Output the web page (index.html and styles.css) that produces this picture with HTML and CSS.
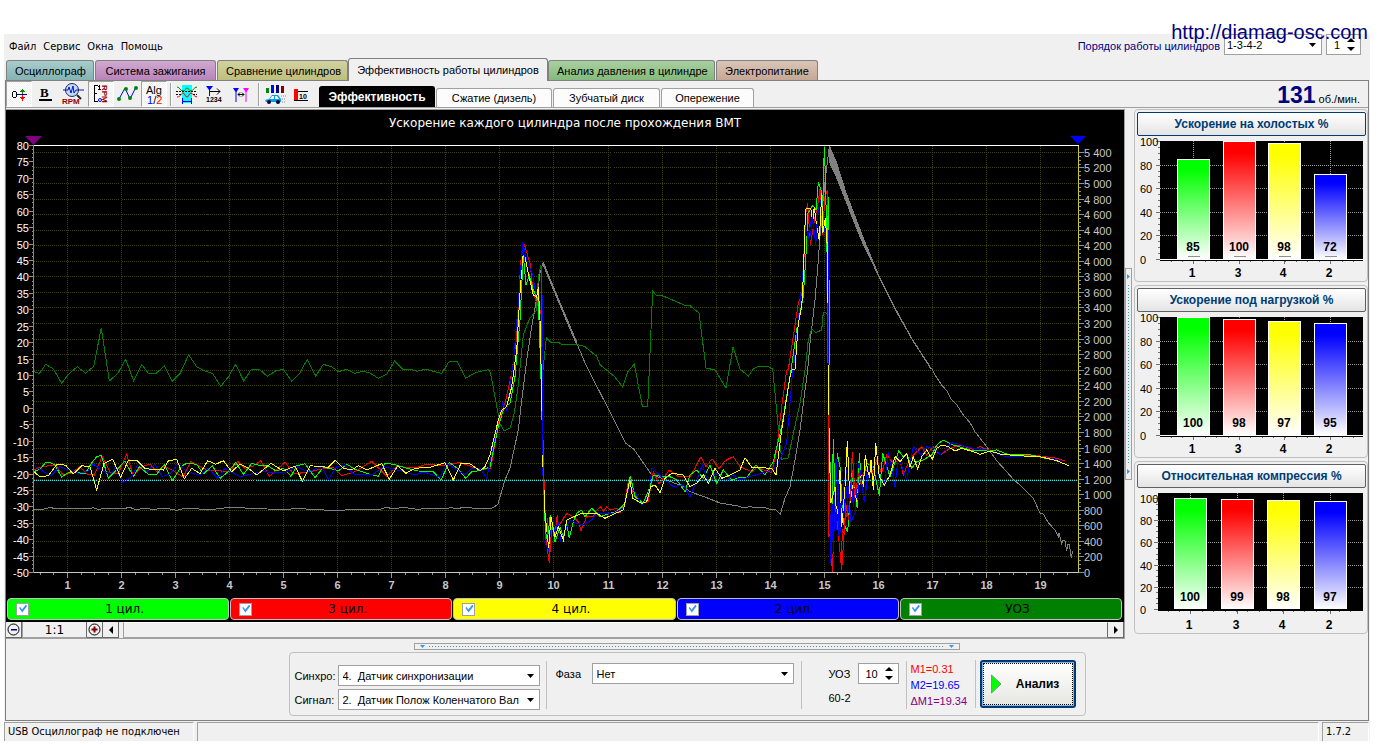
FILE: index.html
```html
<!DOCTYPE html>
<html lang="ru">
<head>
<meta charset="utf-8">
<title>Эффективность работы цилиндров</title>
<link rel="stylesheet" href="styles.css">
</head>
<body>
<div class="app">
  <a class="site" href="http://diamag-osc.com">http://diamag-osc.com</a>
  <header class="top">
    <nav class="menu">
      <button>Файл</button><button>Сервис</button><button>Окна</button><button>Помощь</button>
    </nav>
    <div class="order">
      <label for="order">Порядок работы цилиндров</label>
      <span class="combo combo-order"><select id="order"><option>1-3-4-2</option></select><svg class="arrow" width="7" height="4"><path d="M0 0h7L3.500 4z"/></svg></span>
      <span class="spin spin-small"><input aria-label="Номер" type="number" value="1"><svg class="updown" width="8" height="13"><path d="M0 4L4 0l4 4zM0 9h8l-4 4z"/></svg></span>
    </div>
  </header>
  <nav class="tabs">
    <button class="tab t1">Осциллограф</button>
    <button class="tab t2">Система зажигания</button>
    <button class="tab t3">Сравнение цилиндров</button>
    <button class="tab current">Эффективность работы цилиндров</button>
    <button class="tab t4">Анализ давления в цилиндре</button>
    <button class="tab t5">Электропитание</button>
  </nav>
  <div class="frame">
    <div class="toolbar">
      <button class="tool pressed" aria-label="Ноль"><svg width="26" height="26" shape-rendering="crispEdges"><g fill="none" stroke="#000"><path d="M6.500 11v5M7 10.500h3M7 16.500h3M10.500 11v5"/></g><path d="M11 13h10v1H11z" fill="#00008b"/><path d="M16 8h1v5h-1zM14 10h5v1h-5zM15 9h3v1h-3z" fill="#080"/><path d="M16 14h1v6h-1zM14 16h5v1h-5zM15 17h3v1h-3z" fill="red"/></svg></button>
      <button class="tool" aria-label="Жирный"><svg width="26" height="26"><text x="8" y="16" class="ico-b">B</text><path d="M7 18h13v2H7z"/></svg></button>
      <button class="tool wide" aria-label="RPM лупа"><svg width="29" height="26"><circle cx="13" cy="9" r="6.500" fill="#bcdcff" stroke="#222a50"/><path d="M4 9h5l1-3 2 6 2-7 1 7 2-3h8" fill="none" stroke="#1212b8"/><path d="M18 14l4 4" stroke="#222" stroke-width="2"/><text x="3" y="23" class="ico-rpm">RPM</text></svg></button>
      <button class="tool pressed" aria-label="Шкала RPM"><svg width="26" height="26"><path d="M6.500 4v17M6 4.500h4M6 12.500h3M6 20.500h4M11.500 4v4M10 5.500h1M10 8.500h3" fill="none" stroke="#000" shape-rendering="crispEdges"/><circle cx="12" cy="19" r="1.500" fill="none" stroke="#00f"/><text x="4" y="-14" transform="rotate(90)" class="ico-rpm">RPM</text></svg></button>
      <button class="tool" aria-label="Точки"><svg width="27" height="26"><path d="M5 18L11 7l5 11 6-12" fill="none" stroke="#00f"/><g fill="#080"><circle cx="5" cy="18" r="2"/><circle cx="12" cy="8" r="2"/><circle cx="16" cy="17" r="2"/><circle cx="22" cy="7" r="2"/></g></svg></button>
      <button class="tool pressed" aria-label="Алгоритм"><svg width="26" height="26"><text x="5" y="13" class="ico-s">Alg</text><text x="6" y="23" class="ico-s"><tspan fill="#00f">1</tspan>/<tspan fill="red">2</tspan></text></svg></button>
      <i class="bar"></i>
      <button class="tool" aria-label="Импульс"><svg width="26" height="26"><path d="M8 4h10v18H8z" fill="#0ff"/><path d="M3 6c3 0 3 4 6 4s2-3 4-3 2 3 4 3 3-4 6-4" fill="none" stroke="#080"/><path d="M3 16c4 0 4-4 6-4s2 4 4 4 2-4 4-4 3 4 6 4" fill="none" stroke="red"/><path d="M2 10.500h21M2 13.500h5M19 13.500h4" stroke="#000" stroke-dasharray="2 1"/><path d="M8.500 17v6M17.500 17v6M8 20.500h10" stroke="#00f"/></svg></button>
      <button class="tool" aria-label="Маркер 1234"><svg width="28" height="26"><path d="M5 5h7L9 9v6H8V9z" fill="#00f"/><path d="M9 10.500h10m-3-3l3 3-3 3" stroke="#000" fill="none"/><text x="5" y="21" class="ico-n">1234</text></svg></button>
      <button class="tool" aria-label="Два маркера"><svg width="28" height="26"><path d="M5 7h6L8.500 11v10h-1V11z" fill="#00f"/><path d="M15 7h6l-2.500 4v10h-1V11z" fill="#f0f"/><path d="M10 13.500h6m-4-2l-2 2 2 2m2-4l2 2-2 2" stroke="#000" fill="none"/></svg></button>
      <i class="bar"></i>
      <button class="tool" aria-label="Автомобиль"><svg width="28" height="26"><path d="M4 7h3v5H4z" fill="#080"/><path d="M9 4h3v8H9z" fill="#00f"/><path d="M14 4h3v8h-3z" fill="#000080"/><path d="M19 5h3v7h-3z" fill="#800000"/><path d="M3 19l4-1 3-4h6l3 4v3H4z" fill="#00a0e8"/><path d="M8 18l2-3h2v3zM13 15h2l2 3h-4z" fill="#fff"/><circle cx="7" cy="21" r="2" fill="#003"/><circle cx="16" cy="21" r="2" fill="#003"/><path d="M19 15h5M20 18h4M20 21h4" stroke="#888" stroke-dasharray="1 1"/></svg></button>
      <button class="tool" aria-label="Столбцы 10"><svg width="26" height="26"><path d="M5 8h4v11H5z" fill="red"/><path d="M9 10.500h10M5 19.500h14" stroke="#000"/><text x="10" y="18" class="ico-n">10</text></svg></button>
      <nav class="subtabs">
        <button class="sub on">Эффективность</button>
        <button class="sub s2">Сжатие (дизель)</button>
        <button class="sub s3">Зубчатый диск</button>
        <button class="sub s4">Опережение</button>
      </nav>
      <p class="rpm"><b>131</b> об./мин.</p>
    </div>
    <div class="main">
      <section class="scope">
        <svg id="plot" class="plot" viewBox="6 110 1118 487" role="img" aria-label="Ускорение каждого цилиндра"></svg>
        <div class="legend">
          <label class="key k1"><input type="checkbox" checked><span>1 цил.</span></label>
          <label class="key k3"><input type="checkbox" checked><span>3 цил.</span></label>
          <label class="key k4"><input type="checkbox" checked><span>4 цил.</span></label>
          <label class="key k2"><input type="checkbox" checked><span>2 цил.</span></label>
          <label class="key kt"><input type="checkbox" checked><span>УОЗ</span></label>
        </div>
        <div class="scroll">
          <button class="sbtn" aria-label="Уменьшить"><svg width="13" height="13"><circle cx="6.500" cy="6.500" r="5.500" fill="none" stroke="#000"/><path d="M4 6h6v1.500H4z" fill="#000080"/></svg></button>
          <span class="ratio">1:1</span>
          <button class="sbtn" aria-label="Увеличить"><svg width="13" height="13"><circle cx="6.500" cy="6.500" r="5.500" fill="none" stroke="#000"/><path d="M3.500 6.500h6M6.500 3.500v6" stroke="#800000" stroke-width="2"/></svg></button>
          <button class="sbtn" aria-label="Влево"><svg width="4" height="8"><path d="M4 0v8L0 4z"/></svg></button>
          <span class="track"></span>
          <button class="sbtn" aria-label="Вправо"><svg width="4" height="8"><path d="M0 0v8l4-4z"/></svg></button>
        </div>
      </section>
      <div class="vsplit"><svg width="3" height="5"><path d="M0 0v5l3-2.500z"/></svg><i></i><svg width="3" height="5"><path d="M0 0v5l3-2.500z"/></svg></div>
      <aside class="side">
        <section class="card"><button class="head focus">Ускорение на холостых %</button><svg class="bars" id="idle" viewBox="1135 137 232 145"></svg></section>
        <section class="card"><button class="head">Ускорение под нагрузкой %</button><svg class="bars" id="load" viewBox="1135 137 232 145"></svg></section>
        <section class="card"><button class="head">Относительная компрессия %</button><svg class="bars" id="comp" viewBox="1135 137 232 145"></svg></section>
      </aside>
    </div>
    <div class="hsplit"><svg width="5" height="3"><path d="M0 0h5L2.500 3z"/></svg><i></i><svg width="5" height="3"><path d="M0 0h5L2.500 3z"/></svg></div>
    <form class="params">
      <div class="inputs">
        <label for="sync">Синхро:</label>
        <span class="combo"><select id="sync"><option>4.&nbsp; Датчик синхронизации</option></select><svg class="arrow" width="7" height="4"><path d="M0 0h7L3.500 4z"/></svg></span>
        <label for="signal">Сигнал:</label>
        <span class="combo"><select id="signal"><option>2.&nbsp; Датчик Полож Коленчатого Вал</option></select><svg class="arrow" width="7" height="4"><path d="M0 0h7L3.500 4z"/></svg></span>
      </div>
      <div class="phase">
        <label for="phase">Фаза</label>
        <span class="combo"><select id="phase"><option>Нет</option></select><svg class="arrow" width="7" height="4"><path d="M0 0h7L3.500 4z"/></svg></span>
      </div>
      <div class="uoz">
        <label for="uoz">УОЗ</label>
        <span class="spin"><input id="uoz" type="number" value="10"><svg class="updown" width="8" height="13"><path d="M0 4L4 0l4 4zM0 9h8l-4 4z"/></svg></span>
        <span class="teeth">60-2</span>
      </div>
      <div class="marks"><span class="m1">M1=0.31</span><span class="m2">M2=19.65</span><span class="dm">ΔM1=19.34</span></div>
      <div class="go"><button type="button" class="run"><svg width="11" height="20"><path d="M.5 1v18L10 10z" fill="#0f0" stroke="#7a9a7a"/></svg><span>Анализ</span></button></div>
    </form>
  </div>
  <footer class="status"><span class="st">USB Осциллограф не подключен</span><span class="st"></span><span class="st">1.7.2</span></footer>
</div>
<script src="chart.js"></script>
</body>
</html>
```
FILE: styles.css
```css
* { box-sizing: border-box; }
body { margin: 0; background: #fff; color: #000; font: 11px/14px "Liberation Sans", Arial, sans-serif; }
button, input, select { font: inherit; color: inherit; margin: 0; padding: 0; border: 0; background: none; }
p { margin: 0; }
svg { display: block; flex: none; }

.app { position: relative; margin: 34px 12px 4px 4px; padding-right: 1px; background: #f0f0f0; }
.site { position: absolute; right: 2px; top: -14px; z-index: 2; font-size: 20px; line-height: 24px; color: #000080; text-decoration: none; }

.top { display: flex; justify-content: space-between; height: 24px; }
.menu { display: flex; gap: 7px; padding: 6px 0 0 5px; font-family: "DejaVu Sans Condensed", "DejaVu Sans", sans-serif; }
.menu button { height: 14px; }
.order { display: flex; align-items: flex-start; gap: 4px; padding-right: 8px; color: #000080; }
.order label { padding-top: 5px; }
.order .combo, .order .spin { color: #000; }

.combo, .spin { position: relative; display: block; height: 21px; border: 1px solid #a0a0a0; background: #fff; }
.combo select { width: 100%; height: 19px; padding: 0 16px 0 4px; appearance: none; outline: 0; }
.combo-order { width: 98px; }
.combo-order select { padding-left: 2px; }
.arrow { position: absolute; right: 5px; top: 8px; }
.spin { width: 41px; }
.spin-small { width: 35px; }
.spin input { width: 100%; height: 19px; padding-left: 7px; appearance: textfield; -moz-appearance: textfield; outline: 0; }
.spin input::-webkit-inner-spin-button { display: none; }
.updown { position: absolute; right: 5px; top: 3px; }

.tabs { display: flex; align-items: flex-end; gap: 1px; height: 22px; padding-left: 2px; }
.tab { height: 20px; padding: 0 8px; border: 1px solid #808080; border-bottom: 0; border-radius: 3px 3px 0 0; white-space: nowrap; }
.t1 { width: 88px; background: linear-gradient(#a9cccc, #84b2b2); }
.t2 { width: 121px; background: linear-gradient(#d0a9d0, #b984b9); }
.t3 { width: 131px; background: linear-gradient(#d2d2a0, #bebe7c); }
.t4 { width: 167px; background: linear-gradient(#a9d0a0, #84b97c); }
.t5 { width: 102px; background: linear-gradient(#dac5b8, #c6a795); }
.tab.current { width: 200px; height: 23px; margin: 0 -1px -1px; background: #f0f0f0; position: relative; }

.frame { margin-left: 1px; border: 1px solid #808080; }
.toolbar { display: flex; height: 27px; border-bottom: 1px solid #a0a0a0; }
.tool { width: 27px; height: 26px; }
.tool.wide { width: 29px; }
.tool.pressed { width: 26px; border: 1px solid #a0a0a0; border-right-color: #fff; border-bottom-color: #fff; background: repeating-conic-gradient(#fff 0 25%, #f0f0f0 0 50%) 0 0 / 2px 2px; }
.tool.pressed svg { margin: -1px; }
.bar { width: 2px; height: 23px; margin: 2px 2px 0 3px; border-left: 1px solid #a0a0a0; border-right: 1px solid #fff; }
.ico-b { font: bold 13px "Liberation Serif", serif; }
.ico-rpm { font: bold 8px "Liberation Sans", sans-serif; fill: #900; }
.ico-s { font: 11px "Liberation Sans", sans-serif; }
.ico-n { font: bold 7px "Liberation Sans", sans-serif; }
.subtabs { display: flex; align-items: flex-end; gap: 1px; padding-left: 3px; }
.sub { height: 19px; border: 1px solid #a0a0a0; border-bottom: 0; border-radius: 3px 3px 0 0; background: #fcfcfc; }
.sub.on { width: 116px; height: 21px; background: #000; border-color: #000; color: #fff; font: bold 12px/14px "Liberation Sans", sans-serif; }
.s2 { width: 116px; }
.s3 { width: 107px; }
.s4 { width: 93px; }
.rpm { margin-left: auto; padding-right: 8px; line-height: 28px; white-space: nowrap; }
.rpm b { font-size: 23px; color: #000080; }

.main { display: grid; grid-template-columns: 1fr 7px 236px; padding-top: 1px; }
.scope { border: 1px solid #a0a0a0; border-left: 0; background: #000; }
.plot { width: 100%; height: auto; }
.legend { display: grid; grid-template-columns: repeat(5, 1fr); gap: 1px; padding: 1px 2px 2px 1px; }
.key { display: flex; align-items: center; height: 22px; padding: 0 8px; border: 1px solid #c0c0c0; border-radius: 4px; font: 12px/16px "DejaVu Sans", sans-serif; }
.key span { flex: 1; text-align: center; }
.key input { appearance: none; position: relative; width: 13px; height: 13px; border: 1px solid #a0a0a0; background: #fff; }
.key input:checked::before { content: ""; position: absolute; left: 2px; top: 1px; width: 8px; height: 8px; background: #3296f4; clip-path: polygon(0 40%, 14% 30%, 38% 62%, 88% 0, 100% 22%, 40% 100%); }
.k1 { background: #0f0; }
.k3 { background: #f00; }
.k4 { background: #ff0; }
.k2 { background: #00f; }
.kt { background: #008000; }
.scroll { display: flex; height: 16px; background: #f0f0f0; }
.sbtn { display: flex; align-items: center; justify-content: center; width: 16px; border-right: 1px solid #696969; border-bottom: 1px solid #696969; }
.ratio { width: 65px; text-align: center; font: 12px/17px "DejaVu Sans", sans-serif; border-right: 1px solid #696969; border-left: 1px solid #a0a0a0; border-bottom: 1px solid #a0a0a0; }
.track { flex: 1; margin-left: 4px; border: 1px solid #a0a0a0; border-top-color: #fff; border-right-color: #696969; }

.vsplit { display: flex; flex-direction: column; align-items: center; justify-content: space-between; align-self: center; height: 212px; padding: 5px 0; border: 1px solid #a0a0a0; }
.vsplit i { width: 1px; height: 178px; background: repeating-linear-gradient(#3296f4 0 1px, transparent 1px 3px); }
.vsplit svg, .hsplit svg { fill: #3296f4; }
.side { display: flex; flex-direction: column; gap: 3px; padding-left: 2px; }
.card { border: 1px solid #c0c0c0; border-radius: 4px; padding-top: 2px; }
.head { display: block; width: calc(100% - 3px); height: 24px; margin: 0 1px 0 2px; border: 1px solid #606060; border-radius: 2px; background: linear-gradient(#fff, #e4e4e4); color: #003c74; font-weight: bold; font-size: 12px; }
.head.focus { border-color: #003c74; }
.bars { width: 100%; height: auto; overflow: visible; }

.hsplit { display: flex; align-items: center; justify-content: space-between; width: 546px; max-width: 100%; height: 7px; margin: 4px auto 2px; border: 1px solid #a0a0a0; padding: 0 5px; }
.hsplit i { flex: 1; height: 1px; margin: 0 4px; background: repeating-linear-gradient(90deg, #3296f4 0 1px, transparent 1px 3px); }
.params { display: flex; width: 797px; max-width: 100%; height: 64px; margin: 0 auto 4px; border: 1px solid #c0c0c0; border-radius: 4px; }
.inputs { display: grid; grid-template-columns: 40px 202px; gap: 3px 3px; align-content: start; padding: 12px 6px 0 5px; }
.inputs label { padding-top: 4px; }
.phase { display: flex; gap: 10px; padding: 2px 7px 0 9px; }
.phase label { padding-top: 4px; width: 26px; }
.phase .combo { width: 202px; }
.phase, .uoz, .marks, .go { border-left: 1px solid #c0c0c0; margin-top: 8px; height: 48px; }
.uoz { display: grid; grid-template-columns: 22px 41px; gap: 7px; align-content: start; padding: 2px 7px 0 27px; }
.uoz label { padding-top: 4px; }
.teeth { white-space: nowrap; }
.marks { display: flex; flex-direction: column; padding-left: 4px; width: 69px; line-height: 16px; white-space: nowrap; }
.m1 { color: #f00; }
.m2 { color: #00f; }
.dm { color: #800080; }
.go { margin-top: 7px; padding-left: 4px; }
.run { display: flex; align-items: center; width: 96px; height: 48px; padding-left: 9px; border: 2px solid #003c74; border-radius: 3px; background: linear-gradient(#fff, #e6e6e0); outline: 1px dotted #000; outline-offset: -4px; font-weight: bold; font-size: 12px; box-shadow: inset 0 0 0 1px #8ab4ec; }
.run span { flex: 1; text-align: center; }

.status { display: grid; grid-template-columns: 190px 1fr 47px; gap: 3px; height: 19px; margin-top: 1px; font-family: "DejaVu Sans Condensed", "DejaVu Sans", sans-serif; }
.st { padding: 2px 3px; border-top: 1px solid #a0a0a0; border-left: 1px solid #a0a0a0; border-right: 1px solid #fff; white-space: nowrap; }

.t { font: 11px "Liberation Sans", Arial, sans-serif; }
.tb { font: bold 11px "Liberation Sans", Arial, sans-serif; }
.tc { font: bold 12px "Liberation Sans", Arial, sans-serif; }
.title { font: 12px "DejaVu Sans", sans-serif; }
```
FILE: chart.js
```js
const NS = 'http://www.w3.org/2000/svg';
function add(parent, name, attrs, text) {
  const e = document.createElementNS(NS, name);
  for (const k in attrs) e.setAttribute(k, attrs[k]);
  if (text !== undefined) e.textContent = text;
  parent.appendChild(e);
  return e;
}
function path(svg, d, stroke, extra) {
  return add(svg, 'path', Object.assign({ d, stroke, fill: 'none', 'shape-rendering': 'crispEdges' }, extra));
}

const plot = document.getElementById('plot');
const L = 33.5, R = 1078.5, T = 145.5, B = 572.5;
const xOf = n => Math.round(67 + (n - 1) * 54.05) + 0.5;
const yRight = v => Math.round(572 - v * 0.0778) + 0.5;
const yLeft = v => Math.round(145 + (80 - v) * 3.285) + 0.5;

add(plot, 'text', { x: 565, y: 127, fill: '#fff', 'text-anchor': 'middle', class: 'title' }, 'Ускорение каждого цилиндра после прохождения ВМТ');

let grid = '', ticks = '';
for (let v = 200; v <= 5400; v += 200) grid += `M${L} ${yRight(v)}H${R}`;
for (let n = 1; n <= 19; n++) grid += `M${xOf(n)} ${T}V${B}`;
path(plot, grid, '#404000', { 'stroke-dasharray': '1 1' });

for (let v = 0; v <= 5400; v += 50) ticks += `M${R} ${yRight(v)}h${v % 200 ? 2 : 5}`;
for (let v = -50; v <= 80; v += 1.25) ticks += `M${L} ${yLeft(v)}h${v % 5 ? -2 : -5}`;
for (let n = 0.5; n < 19.6; n += 0.25) ticks += `M${xOf(n)} ${B}v${n % 1 ? 2 : 5}`;
path(plot, ticks, '#909090');
for (let v = 0; v <= 5400; v += 200)
  add(plot, 'text', { x: 1084, y: yRight(v) + 4, fill: '#c8c8c8', class: 't' }, String(v).replace(/(\d)(\d{3})$/, '$1 $2'));
for (let v = -50; v <= 80; v += 5)
  add(plot, 'text', { x: 29, y: yLeft(v) + 4, fill: '#fff', 'text-anchor': 'end', class: 't' }, v);
for (let n = 1; n <= 19; n++)
  add(plot, 'text', { x: xOf(n), y: 589, fill: '#c8c8c8', 'text-anchor': 'middle', class: 'tb' }, n);

// Each trace is a list of blocks: origin x, origin y, then points in thirds of a unit.
function trace(color, blocks, extra) {
  const pts = [];
  for (const [ox, oy, s] of blocks)
    for (const p of s.split(',')) {
      const [x, y] = p.trim().split(' ').map(Number);
      pts.push(`${(ox + x / 3).toFixed(1)} ${(oy + y / 3).toFixed(1)}`);
    }
  path(plot, 'M' + pts.join('L'), color, extra);
}

trace('#808080', [
  [0, 300, '101 628,130 628,150 622,165 626,270 626,280 623,295 628,320 625,375 625,390 622,408 630,430 625,460 628,500 625,530 631,550 626,640 628,690 622,720 622,740 625,800 627,850 628,900 626,990 631,1140 628,1160 622,1180 627,1210 622,1250 628,1290 625,1340 627,1350 622,1370 627,1390 622,1440 626'],
  [470, 220, '65 865,83 854,105 780,120 745,145 630,155 540,170 420,185 320,200 235,210 160,219 128,270 252,320 370,350 440,412 560,467 670,492 688,545 765,590 780,640 800,660 815,705 831,750 849'],
  [740, 370, '0 409,10 414,30 410,50 414,70 412,90 418,105 417,121 432,135 385,150 350,165 270,180 180,195 60,203 0'],
  [740, 130, '210 640,225 510,235 390,245 250,258 130,268 50']
]);
trace('#808080', [[470, 220, '219 128,240 180,270 252,320 370']], { 'stroke-width': 2 });
trace('none', [[740, 130, '266 45,270 48,290 95,320 190,370 320,415 430,470 540,520 630,577 718,570 715,517 632,462 535,408 425,360 325,315 210,285 135,266 95']], { fill: '#808080' });
trace('#808080', [[740, 370, '574 -6,590 23,605 45,620 62,635 90,650 104,670 135,690 158,705 185,740 230,770 272,800 305,820 328,840 345,880 385,900 430,910 432,925 458,945 480,955 500,957 490,965 520,970 510,975 512,980 542,983 523,988 523,994 565,998 542']]);
trace('#008000', [
  [0, 300, '101 214,118 221,137 193,160 207,185 250,207 221,232 200,257 220,281 199,304 84,328 243,354 220,377 178,401 243,425 193,445 220,468 220,493 198,517 244,541 219,566 164,590 200,615 213,638 221,662 259,685 231,707 193,731 243,754 208,778 208,802 229,828 212,850 208,875 244,899 220,922 178,947 228,970 193,995 201,1016 215,1041 208,1064 220,1088 214,1110 219,1135 235,1160 223,1184 183,1208 208,1232 208,1252 214,1276 207,1300 214,1325 220,1348 184,1372 184,1397 235,1420 221,1440 214'],
  [470, 220, '57 449,62 462,90 611,102 632,120 625,133 580,145 495,160 345,178 297,200 270,205 170,213 135,219 450,229 354,242 367,267 368,274 373,325 374,345 380,380 409,390 434,434 470,458 501,475 452,493 433,517 558,533 559,548 212,558 225,580 228,642 255,660 257,687 279,708 444,735 450,768 504,789 381,810 447'],
  [740, 370, '25 18,42 -5,60 -12,80 -12,98 -4,118 205,125 268,145 264,160 190,180 100,195 0'],
  [740, 130, '205 630,215 597,227 608,245 600,250 547,262 550,268 690']
]);
trace('#f00', [
  [0, 300, '101 510,125 500,165 495,190 525,215 518,240 500,260 522,283 525,307 469,332 520,355 520,380 463,400 528,425 500,450 492,470 515,493 498,517 510,550 532,572 484,590 495,620 510,690 515,713 484,735 505,755 500,783 482,808 530,830 508,856 487,880 522,930 515,960 508,1000 502,1025 527,1065 515,1115 484,1160 528,1190 500,1250 503,1280 492,1330 498,1380 487,1440 510'],
  [470, 220, '62 745,85 610,105 550,125 460,140 350,152 125,163 72,180 130,190 220,205 260,207 295,213 270,220 715,228 960,238 1030,245 920,255 945,262 885,265 920,290 880,310 890,325 905,333 932,350 890,370 890,380 870,392 860,400 875,410 860,420 870,440 865,450 880,465 845,475 785,490 820,515 850,535 845,550 755,567 792,598 750,625 770,660 770,675 744,693 710,708 740,726 716,747 746,765 722,790 710'],
  [740, 370, '0 290,35 305,50 293,95 308,110 240,125 110,140 0'],
  [740, 130, '145 718,175 520,188 485,197 250,203 220,211 345,225 260,232 235,241 172,247 315,255 200,262 180,265 700'],
  [740, 370, '265 500,271 490,277 605,285 400,293 470,305 600,315 450,330 400,337 245,345 370,360 330,375 300,395 310,410 270,425 310,440 255,460 280,480 270,490 315,500 290,515 260,545 230,560 255,580 230,600 255,630 235,660 225,700 238,720 230,740 238,780 252,830 257,900 258,950 265,975 273']
]);
trace('#0f0', [
  [0, 300, '101 515,120 508,137 487,150 487,165 495,185 532,200 520,220 515,255 522,275 488,290 470,304 466,325 535,345 515,375 483,400 530,418 500,445 523,470 523,493 493,517 542,545 498,560 490,590 493,610 522,637 497,660 535,685 515,707 487,730 523,755 490,780 497,800 495,828 513,850 505,873 529,890 497,915 491,945 533,970 502,1000 508,1016 512,1041 493,1065 508,1100 520,1135 529,1155 490,1180 493,1215 503,1255 513,1300 515,1323 540,1348 487,1372 505,1397 535,1415 515,1440 512'],
  [470, 220, '60 740,85 620,100 570,120 550,135 470,150 300,160 105,168 195,178 165,190 210,205 240,212 440,219 720,226 930,232 960,241 885,255 965,270 920,280 950,290 910,298 955,310 905,320 880,335 870,345 890,365 865,390 890,420 880,440 875,465 850,481 768,495 830,520 850,540 800,550 765,580 770,600 770,620 780,645 815,660 765,680 750,700 775,720 735,740 790,760 750,785 780'],
  [740, 370, '0 322,20 323,48 285,75 315,100 275,125 170,153 0'],
  [740, 130, '170 600,190 500,200 340,204 250,218 226,228 240,235 157,243 180,248 230,253 52,257 160,260 365,266 200,268 690'],
  [740, 370, '268 200,275 460,280 208,285 380,292 250,300 290,310 460,323 485,335 310,352 415,358 250,365 350,380 280,400 290,418 377,428 250,450 320,476 243,490 260,500 250,515 295,530 275,550 270,575 255,590 225,610 210,640 225,700 243,770 240,800 252,870 254,930 268,950 268']
]);
trace('#00f', [
  [0, 300, '106 500,152 528,180 500,235 520,262 515,280 492,310 515,335 520,345 500,368 547,395 530,415 490,440 515,465 492,487 530,510 522,535 490,560 515,600 525,625 505,653 535,675 505,720 530,780 515,850 518,890 500,925 515,965 500,985 538,1010 500,1035 495,1060 522,1120 523,1150 500,1200 512,1245 525,1270 516,1320 532,1340 490,1395 525,1415 505,1440 505'],
  [470, 220, '50 775,85 600,98 550,110 570,130 430,145 250,158 65,170 120,188 165,200 235,206 200,213 380,217 570,221 960,235 990,245 900,255 935,265 905,272 960,300 900,320 910,340 915,365 900,380 880,430 880,460 865,478 800,495 815,515 855,535 830,546 745,580 775,610 800,640 795,660 830,680 780,697 735,715 790,738 760,765 785,790 765'],
  [740, 370, '0 330,100 298,115 280,140 220,158 0'],
  [740, 130, '162 700,172 600,188 440,196 290,208 330,218 270,227 345,235 240,243 210,250 320,256 280,260 460,267 700'],
  [740, 370, '268 60,271 578,276 400,280 545,288 265,298 520,310 350,320 300,333 455,345 430,355 280,373 395,390 280,410 310,433 345,445 245,465 350,475 260,500 330,520 230,545 255,560 230,585 235,600 255,635 218,700 235,740 240,790 258,900 260,965 272']
]);
trace('#ff0', [
  [0, 300, '101 515,120 530,145 527,172 492,197 496,220 522,245 497,270 500,290 570,312 490,338 478,362 532,385 481,410 481,435 506,490 510,505 483,530 478,553 536,575 505,600 521,623 482,647 493,670 482,695 515,720 492,745 505,770 525,813 490,850 513,885 498,907 544,930 497,985 502,1005 481,1030 505,1055 510,1075 497,1100 510,1145 491,1168 538,1193 497,1218 520,1245 505,1290 502,1335 488,1360 540,1383 490,1408 490,1440 512'],
  [470, 220, '45 740,60 705,85 600,95 570,110 560,125 500,140 390,150 220,158 110,165 110,175 160,190 225,200 232,205 200,210 300,215 520,219 740,225 880,236 985,243 890,255 950,265 920,280 960,290 900,330 882,380 880,405 895,425 885,460 870,480 780,488 835,515 850,530 845,542 800,555 795,570 818,585 775,605 760,640 765,660 800,680 790,700 765,715 790,735 745,755 775,780 765'],
  [740, 370, '0 300,15 263,35 292,95 295,108 315,125 180,150 20,155 0'],
  [740, 130, '165 718,175 580,185 530,190 440,194 310,197 237,212 235,218 275,223 230,230 290,238 330,245 190,248 310,256 265,262 350,266 700'],
  [740, 370, '266 130,272 400,278 380,285 350,290 445,300 300,305 470,315 350,322 213,330 400,340 340,350 395,362 310,370 350,376 255,388 330,393 270,400 360,407 220,418 320,433 345,450 315,465 260,480 275,500 250,510 290,520 260,533 298,545 260,560 240,577 268,590 235,605 225,625 230,645 243,665 235,700 245,720 253,750 243,780 252,830 257,900 260,950 272,987 287']
]);
// The steep drops after both peaks alternate between the cylinder colours.
path(plot, 'M828.5 230V400', '#00f');
path(plot, 'M829.5 308V358', '#0f0');
path(plot, 'M827.5 303V363M828.5 415V537', '#f00');
path(plot, 'M828.5 365V414', '#ff0');
path(plot, 'M542.5 295V455M543.5 480V540', '#00f');
path(plot, 'M543.5 458V495M547.5 518V535M549.5 545V563', '#f00');
// Noise bursts that stay in front of the traces above.
trace('#00f', [[740, 370, '270 470,273 570,277 440,281 510,284 430,289 480,294 330,299 500,303 400,311 440,318 350,325 430,334 330,340 410,347 350,352 390,361 300,368 360,374 390,381 310,390 330']]);
trace('#f00', [[740, 370, '304 595,307 480,313 490,317 400,326 450,331 380,338 300,344 380,356 310,364 345']]);
trace('#00f', [[470, 220, '154 150,158 65,164 120']]);
trace('#00f', [[740, 130, '200 300,205 320,210 290,216 260,222 300,227 340,233 250']]);

path(plot, `M${L} 480.5H${R}`, '#0ff', { 'stroke-dasharray': '1 1' });
path(plot, `M${L} ${T}H${R}`, '#fff');
path(plot, `M${L} ${B}H${R}`, '#c8c8c8');
path(plot, `M${L} ${T}V${B}`, '#50b050');
path(plot, `M${R} ${T}V${B}`, '#c8c840');
add(plot, 'path', { d: 'M25 136h17l-8.500 9z', fill: '#800080' });
add(plot, 'path', { d: 'M1070 136h16l-8 8z', fill: '#00f' });

function bars(id, values, o) {
  const svg = document.getElementById(id);
  const colors = ['#00ff00', '#ff0000', '#ffff00', '#0000ff'];
  const names = [1, 3, 4, 2];
  const y = v => Math.round(o.zero - v * o.k) + 0.5;
  add(svg, 'rect', { x: o.left, y: o.top, width: 1363 - o.left, height: o.zero - o.top + 1, fill: '#000' });
  let g = '', t = '';
  for (let v = 20; v <= 80; v += 20) g += `M${o.left} ${y(v)}H1363`;
  o.xs.forEach(x => { g += `M${x + 16.5} ${o.top}V${o.zero}`; });
  path(svg, g, '#999', { 'stroke-dasharray': '1 1' });
  for (let v = 0; v <= 100; v += 5) t += `M${o.left} ${y(v)}h${v % 20 ? -2 : -4}`;
  for (let i = -1; i <= 15; i++) t += `M${Math.round(o.xs[0] + 5 + i * 11.4) + 0.5} ${o.zero + 1}v2`;
  o.xs.forEach(x => { t += `M${x + 16.5} ${o.zero + 1}v4`; });
  path(svg, t, '#707070');
  for (let v = 0; v <= 100; v += 20)
    add(svg, 'text', { x: 1140, y: y(v) + 4, class: 't' }, v);
  values.forEach((v, i) => {
    const x = o.xs[i], gid = id + i;
    const lg = add(svg, 'linearGradient', { id: gid, x2: 0, y2: 1 });
    add(lg, 'stop', { offset: 0, 'stop-color': colors[i] });
    add(lg, 'stop', { offset: 0.1, 'stop-color': colors[i] });
    add(lg, 'stop', { offset: 1, 'stop-color': '#fff' });
    add(svg, 'rect', { x: x + 0.5, y: y(v), width: 32, height: o.zero + 0.5 - y(v), fill: `url(#${gid})`, stroke: '#fff' });
    add(svg, 'text', { x: x + 16, y: o.zero - 8, 'text-anchor': 'middle', class: 'tc' }, v);
    if (o.marks) path(svg, `M${x + 11} ${o.zero - 2.5}h12`, '#909090');
    add(svg, 'text', { x: x + 15, y: 278, 'text-anchor': 'middle', class: 'tc' }, names[i]);
  });
  path(svg, `M${o.left} ${o.zero + 0.5}H1363`, o.base);
  path(svg, `M${o.left} ${o.zero + 1.5}H1363`, '#000');
}
const wide = { left: 1160, top: 142, zero: 260, k: 1.18, xs: [1177, 1223, 1268, 1314], base: '#fff' };
bars('idle', [85, 100, 98, 72], Object.assign({ marks: true }, wide));
bars('load', [100, 98, 97, 95], wide);
bars('comp', [100, 99, 98, 97], { left: 1158, top: 142, zero: 258, k: 1.11, xs: [1174, 1221, 1267, 1314], base: '#000' });
```
